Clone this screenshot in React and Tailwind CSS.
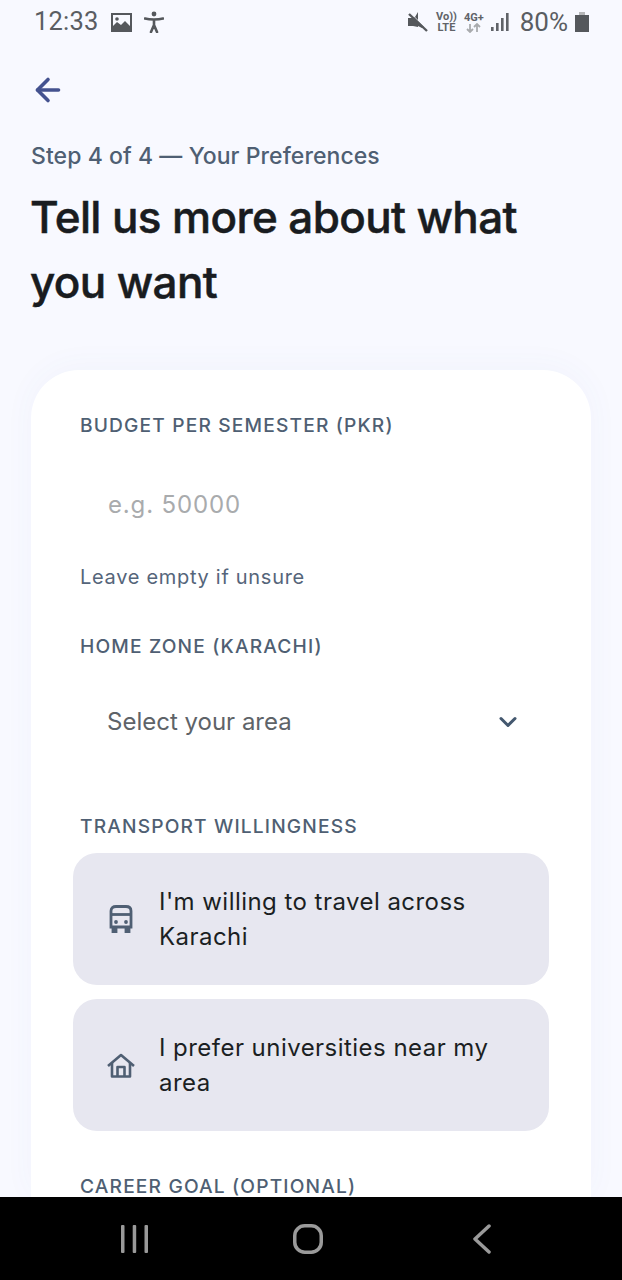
import React from "react";
import { ArrowLeft, ChevronDown } from "lucide-react";

const Label = ({ children, className = "" }) => (
  <div className={`text-[19.2px] leading-[24px] font-medium tracking-[1.15px] text-[#4f5f73] ${className}`}>{children}</div>
);

const Option = ({ icon, first, second, className = "" }) => (
  <div className={`flex items-center h-[132px] rounded-[24px] bg-[#e7e7f0] pl-[35px] ${className}`}>
    <div className="w-[51px] flex justify-start">{icon}</div>
    <div className="text-[24px] leading-[35px] tracking-[0.46px] text-[#1b1f23]">
      <div>{first}</div>
      <div>{second}</div>
    </div>
  </div>
);

export default function App() {
  return (
    <div className="w-[622px] h-[1280px] flex flex-col overflow-hidden bg-[#f8f9ff] font-['Inter',sans-serif]">
      <div className="h-[1197px] flex flex-col overflow-hidden">
        <div className="h-[44px] shrink-0 flex items-center justify-between pl-[34px] pr-[33px] text-[#5a5d62] font-['Roboto',sans-serif]">
          <div className="flex items-center">
            <span className="text-[25.5px] leading-none tracking-[0.2px]">12:33</span>
            <svg width="21" height="20" viewBox="0 0 21 20" className="ml-[12px]">
              <path fillRule="evenodd" fill="#55585c" d="M0 1h21v19H0zM2 3v11l4-4 4 3 4-4 5 5V3z" />
              <circle cx="6" cy="7" r="1.8" fill="#55585c" />
            </svg>
            <svg width="20" height="22" viewBox="0 0 20 22" className="ml-[12px]">
              <circle cx="10" cy="3" r="2.4" fill="#55585c" />
              <path d="M1 7.5c3 .8 5.5 1 9 1s6-.2 9-1M10 8.5V14M10 14l-3 7M10 14l3 7" stroke="#55585c" strokeWidth="2.6" fill="none" strokeLinecap="round" />
            </svg>
          </div>
          <div className="flex items-center">
            <svg width="20" height="22" viewBox="0 0 20 22">
              <path fill="#55585c" d="M0 7h4l2 -1 10 10-2 1-4 -2v1L5 15H0zM10 1v8L7 6z" />
              <path d="M1 3l18 17" stroke="#55585c" strokeWidth="2.4" />
            </svg>
            <div className="ml-[8px] flex flex-col items-center text-[11px] leading-[11px] font-bold text-[#606368] font-['Roboto',sans-serif]">
              <span>Vo))</span>
              <span>LTE</span>
            </div>
            <div className="ml-[7px] flex flex-col items-center text-[11px] leading-[11px] font-bold text-[#606368]">
              <span>4G+</span>
              <svg width="18" height="10" viewBox="0 0 18 10">
                <path d="M5 1v8M2 6l3 3 3-3M12 9V1M9 4l3-3 3 3" stroke="#a9abae" strokeWidth="1.8" fill="none" />
              </svg>
            </div>
            <svg width="20" height="22" viewBox="0 0 20 22" className="ml-[6px]">
              <rect x="1" y="16" width="2.6" height="4" fill="#606368" />
              <rect x="6" y="12" width="2.6" height="8" fill="#606368" />
              <rect x="11" y="7" width="2.6" height="13" fill="#606368" />
              <rect x="16" y="2" width="2.6" height="18" fill="#606368" />
            </svg>
            <span className="ml-[10px] text-[26px] leading-none">80%</span>
            <svg width="14" height="20" viewBox="0 0 14 20" className="ml-[7px]">
              <path fill="#b5b6b8" d="M4 0h6v3H4z" />
              <path fill="#55585c" d="M0 3h14v17H0z" />
            </svg>
          </div>
        </div>

        <div className="pl-[31px] pt-[28px]">
          <ArrowLeft size={36} strokeWidth={2.4} color="#44528f" className="-ml-[1px]" />
          <div className="mt-[33px] text-[23px] leading-[30px] font-medium tracking-[0.07px] text-[#4f5f73]">
            Step 4 of 4 — Your Preferences
          </div>
          <h1 className="mt-[14px] -ml-[1px] text-[44px] leading-[65px] font-medium [-webkit-text-stroke:0.5px] tracking-[-0.62px] text-[#191c20]">
            Tell us more about what
            <br />
            you want
          </h1>
        </div>

        <div className="mt-[55px] mx-[31px] flex-1 rounded-t-[48px] bg-white shadow-[0_-4px_32px_rgba(70,90,190,0.04)] px-[42px] pt-[43px]">
          <Label className="pl-[7px]">BUDGET PER SEMESTER (PKR)</Label>
          <div className="mt-[53px] pl-[35px] text-[24px] leading-[30px] tracking-[0.85px] text-[#a9abad]">e.g. 50000</div>
          <div className="mt-[44px] pl-[7px] text-[20px] leading-[26px] tracking-[0.7px] text-[#55657a]">Leave empty if unsure</div>
          <Label className="mt-[44px] pl-[7px]">HOME ZONE (KARACHI)</Label>
          <div className="mt-[49px] flex items-center justify-between pl-[34px] pr-[27px]">
            <span className="text-[24px] leading-[30px] tracking-[0px] text-[#5e6368]">Select your area</span>
            <ChevronDown size={28} strokeWidth={2.6} color="#44586f" />
          </div>
          <Label className="mt-[77px] pl-[7px]">TRANSPORT WILLINGNESS</Label>
          <Option
            className="mt-[15px]"
            first="I'm willing to travel across"
            second="Karachi"
            icon={
              <svg width="24" height="28" viewBox="0 0 24 28" fill="none" stroke="#4f5f73" strokeWidth="2.8" className="ml-[1px]">
                <path d="M2 6c0-3 2-4.500 5-4.500h10c3 0 5 1.500 5 4.500v16H2z" />
                <path d="M2 9.500h20" />
                <path d="M4 23v3.500h3V23M17 23v3.500h3V23" fill="#4f5f73" />
                <circle cx="7" cy="17" r="1.900" fill="#4f5f73" stroke="none" />
                <circle cx="17" cy="17" r="1.900" fill="#4f5f73" stroke="none" />
              </svg>
            }
          />
          <Option
            className="mt-[14px]"
            first="I prefer universities near my"
            second="area"
            icon={
              <svg width="28" height="25" viewBox="0 0 28 25" fill="none" stroke="#4f5f73" strokeWidth="2.600" strokeLinejoin="round" className="-ml-[1px]">
                <path d="M1 13L14 2l13 11" />
                <path d="M5 10v13.500h18V10" />
                <path d="M10.500 23.500V14h7v9.500" />
              </svg>
            }
          />
          <Label className="mt-[43px] pl-[7px]">CAREER GOAL (OPTIONAL)</Label>
        </div>
      </div>

      <div className="h-[83px] shrink-0 bg-black flex items-center pl-[121px]">
        <svg width="27" height="30" viewBox="0 0 27 30" fill="#9a9a9a">
          <rect x="0" y="1" width="3.500" height="28" rx="1" />
          <rect x="11.700" y="1" width="3.500" height="28" rx="1" />
          <rect x="23.500" y="1" width="3.500" height="28" rx="1" />
        </svg>
        <svg width="30" height="30" viewBox="0 0 30 30" fill="none" stroke="#9a9a9a" strokeWidth="3.500" className="ml-[145px]">
          <rect x="1.750" y="1.750" width="26.500" height="26.500" rx="10" />
        </svg>
        <svg width="18" height="30" viewBox="0 0 18 30" fill="none" stroke="#9a9a9a" strokeWidth="3.500" strokeLinecap="round" strokeLinejoin="round" className="ml-[150px]">
          <path d="M16 2L2 15l14 13" />
        </svg>
      </div>
    </div>
  );
}
